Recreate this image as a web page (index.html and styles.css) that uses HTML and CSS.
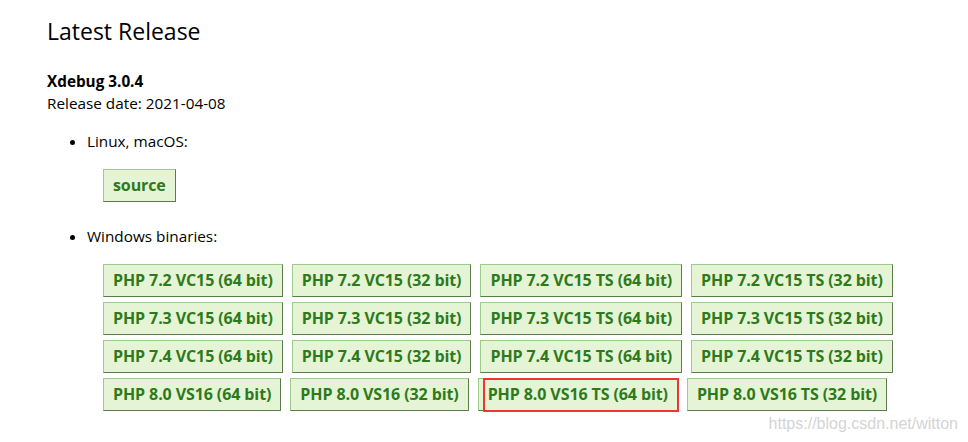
FILE: index.html
```html
<!DOCTYPE html>
<html>
<head>
<meta charset="utf-8">
<link rel="stylesheet" href="styles.css">
</head>
<body>
<main class="page">
  <h2 class="title">Latest Release</h2>
  <p class="release"><strong>Xdebug 3.0.4</strong><br>Release date: 2021-04-08</p>
  <ul class="platforms">
    <li>
      <span class="label">Linux, macOS:</span>
      <div class="buttons">
        <a class="btn" href="#">source</a>
      </div>
    </li>
    <li>
      <span class="label">Windows binaries:</span>
      <div class="buttons grid">
        <a class="btn" href="#">PHP 7.2 VC15 (64 bit)</a>
        <a class="btn" href="#">PHP 7.2 VC15 (32 bit)</a>
        <a class="btn" href="#">PHP 7.2 VC15 TS (64 bit)</a>
        <a class="btn" href="#">PHP 7.2 VC15 TS (32 bit)</a>
        <a class="btn" href="#">PHP 7.3 VC15 (64 bit)</a>
        <a class="btn" href="#">PHP 7.3 VC15 (32 bit)</a>
        <a class="btn" href="#">PHP 7.3 VC15 TS (64 bit)</a>
        <a class="btn" href="#">PHP 7.3 VC15 TS (32 bit)</a>
        <a class="btn" href="#">PHP 7.4 VC15 (64 bit)</a>
        <a class="btn" href="#">PHP 7.4 VC15 (32 bit)</a>
        <a class="btn" href="#">PHP 7.4 VC15 TS (64 bit)</a>
        <a class="btn" href="#">PHP 7.4 VC15 TS (32 bit)</a>
        <a class="btn" href="#">PHP 8.0 VS16 (64 bit)</a>
        <a class="btn" href="#">PHP 8.0 VS16 (32 bit)</a>
        <a class="btn marked" href="#">PHP 8.0 VS16 TS (64 bit)</a>
        <a class="btn" href="#">PHP 8.0 VS16 TS (32 bit)</a>
      </div>
    </li>
  </ul>
</main>
<div class="watermark">https://blog.csdn.net/witton</div>
</body>
</html>
```
FILE: styles.css
```css
html, body {
  margin: 0;
  padding: 0;
  background: #fff;
}
body {
  font-family: "Open Sans", "Noto Sans", sans-serif;
  color: #000;
  font-size: 15.3px;
  width: 968px;
  height: 442px;
  overflow: hidden;
  position: relative;
}
.page {
  padding: 14px 0 0 47px;
}
.title {
  font-size: 23px;
  font-weight: 400;
  margin: 0 0 22px 0;
  line-height: 34px;
}
.release {
  margin: 0 0 16px 0;
  line-height: 22px;
}
.release strong {
  font-weight: 700;
}
.platforms {
  margin: 0;
  padding: 0 0 0 40px;
  list-style: disc;
}
.platforms li {
  margin-bottom: 23px;
}
.label {
  display: block;
  line-height: 22px;
}
.buttons {
  display: flex;
  flex-wrap: wrap;
  column-gap: 9px;
  row-gap: 5px;
  margin: 17px 0 0 16px;
  width: 810px;
}
.btn {
  display: inline-block;
  box-sizing: border-box;
  height: 33px;
  line-height: 31px;
  padding: 0 9px;
  background: #e6f4d6;
  border: 1px solid #9ccb8c;
  border-right-color: #5c7c4e;
  border-bottom-color: #5c7c4e;
  color: #2d7a1c;
  font-weight: 700;
  font-size: 16px;
  text-decoration: none;
  white-space: nowrap;
  letter-spacing: -0.1px;
}
.marked {
  position: relative;
}
.marked::after {
  content: "";
  position: absolute;
  left: 4px;
  top: -1px;
  right: -2px;
  bottom: -2px;
  border: 2px solid #f03434;
}
.watermark {
  position: absolute;
  right: 10px;
  bottom: 9px;
  font-family: "Liberation Sans", Arial, sans-serif;
  font-size: 16px;
  color: #d4d4d4;
}
```
